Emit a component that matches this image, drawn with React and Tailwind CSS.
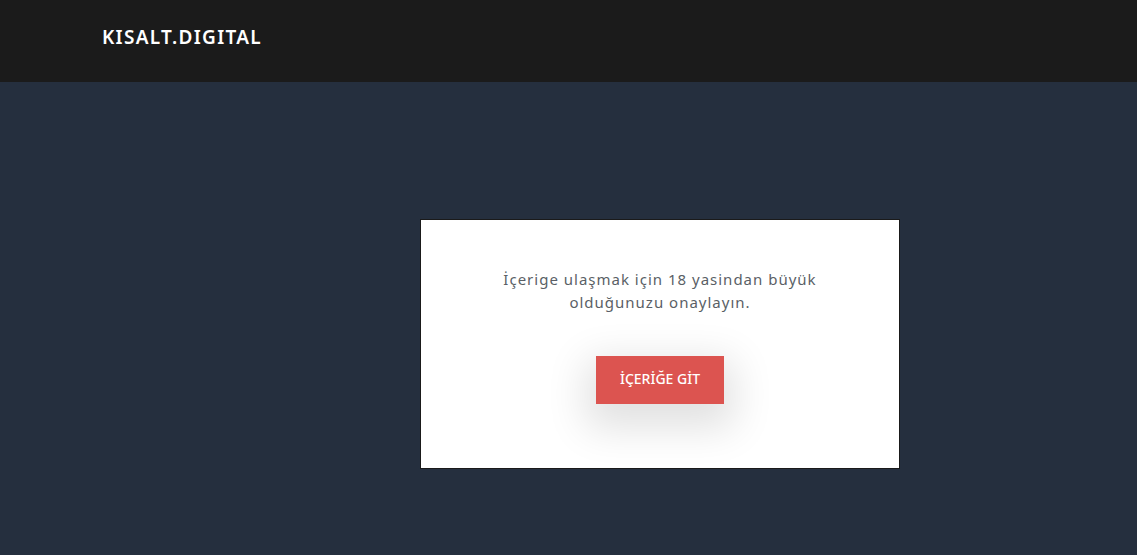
export default function App() {
  return (
    <div className="min-h-[555px] w-full bg-[#252f3e] font-['Noto_Sans',sans-serif]">
      <header className="h-[82px] bg-[#1b1b1b] flex items-start pt-[24px] pl-[102px]">
        <span className="text-white font-semibold text-[19px] leading-[26px] tracking-[1.3px]">KISALT.DIGITAL</span>
      </header>
      <div className="flex justify-start pl-[420px] pt-[137px] pb-[87px]">
        <div className="w-[480px] h-[250px] bg-white border border-[#1a1a1a] flex flex-col items-center pt-[48px]">
          <p className="w-[360px] text-center text-[15px] leading-[23px] tracking-[1px] text-[#5a5f66]">
            İçerige ulaşmak için 18 yasindan büyük olduğunuzu onaylayın.
          </p>
          <button className="mt-[42px] w-[128px] h-[48px] pb-[3px] bg-[#dc5450] text-white text-[14px] font-medium shadow-[0_14px_40px_10px_rgba(0,0,0,0.12)]">
            İÇERİĞE GİT
          </button>
        </div>
      </div>
    </div>
  );
}
